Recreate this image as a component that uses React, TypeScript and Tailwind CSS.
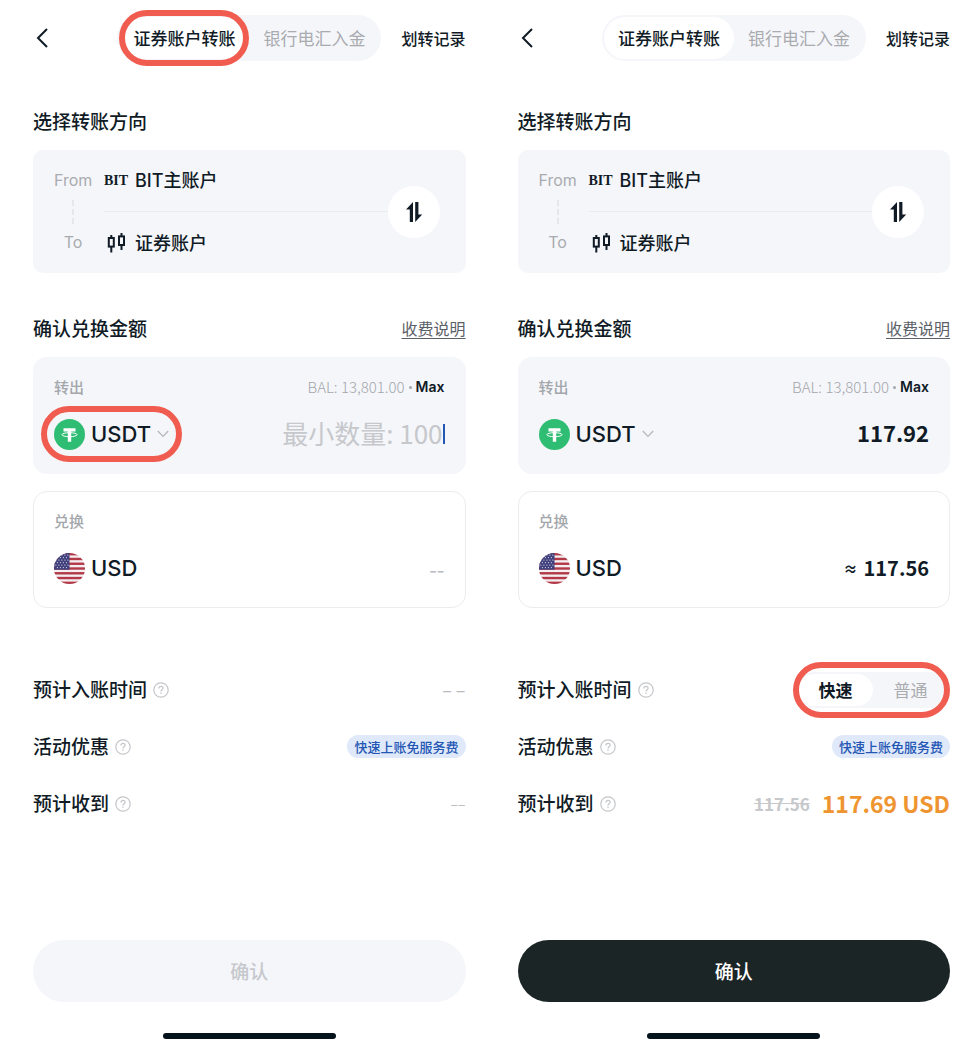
import React, { useState } from "react";

const STARS = [
  [1.5, 1.5], [4.5, 1.5], [7.5, 1.5], [10.5, 1.5], [13.5, 1.5],
  [3, 4], [6, 4], [9, 4], [12, 4],
  [1.5, 6.5], [4.5, 6.5], [7.5, 6.5], [10.5, 6.5], [13.5, 6.5],
  [3, 9], [6, 9], [9, 9], [12, 9],
  [1.5, 11.5], [4.5, 11.5], [7.5, 11.5], [10.5, 11.5], [13.5, 11.5],
  [3, 14], [6, 14], [9, 14], [12, 14],
];

const BackIcon = () => (
  <svg width="12" height="20" viewBox="0 0 12 20" fill="none" stroke="currentColor" strokeWidth="2">
    <path d="M11 1 2 10l9 9" />
  </svg>
);

const CandleIcon = () => (
  <svg width="19" height="20" viewBox="0 0 19 20" fill="none" stroke="currentColor" strokeWidth="2">
    <rect x="1.8" y="5" width="5" height="8.6" />
    <path d="M4.3 2V5M4.3 13.6v6" />
    <rect x="12" y="3.4" width="5" height="8.6" />
    <path d="M14.5 0v3.4M14.5 12v5" />
  </svg>
);

const SwapIcon = () => (
  <svg width="18" height="20" viewBox="0 0 18 20" fill="currentColor">
    <path d="M8 0v20H4.8V7.6H1z" />
    <path d="M10.2 20V0h3.2v12.4h3.8z" />
  </svg>
);

const HelpIcon = () => (
  <svg width="16" height="16" viewBox="0 0 16 16" fill="none" stroke="currentColor" strokeWidth="1.2">
    <circle cx="8" cy="8" r="7.2" />
    <path d="M5.9 6.4c0-1.3.9-2.1 2.1-2.1s2.1.8 2.1 1.9c0 1.5-2.1 1.6-2.1 3.2" />
    <path d="M8 10.6v1.4" />
  </svg>
);

const TetherIcon = () => (
  <svg width="31" height="31" viewBox="0 0 31 31">
    <circle cx="15.5" cy="15.5" r="15.5" fill="#2fbc73" />
    <path d="M9.5 9.2h12v3.2h-4.3v10.4h-3.4V12.4H9.5z" fill="#fff" />
    <ellipse cx="15.5" cy="15.7" rx="7.6" ry="2" fill="none" stroke="#fff" strokeWidth="1" />
  </svg>
);

const FlagIcon = () => (
  <svg width="31" height="31" viewBox="0 0 31 31">
    <defs>
      <clipPath id="flag-circle">
        <circle cx="15.5" cy="15.5" r="15.5" />
      </clipPath>
    </defs>
    <g clipPath="url(#flag-circle)">
      <rect width="31" height="31" fill="#f5eef0" />
      {[0, 1, 2, 3, 4, 5, 6].map(i => (
        <rect key={i} y={i * 4.77} width="31" height="2.4" fill="#b23a48" />
      ))}
      <rect width="15.5" height="16.7" fill="#40407c" />
      {STARS.map(([x, y]) => (
        <circle key={`${x}-${y}`} cx={x + 0.4} cy={y + 0.6} r="0.6" fill="#dcdcec" />
      ))}
    </g>
  </svg>
);

const ChevronIcon = () => (
  <svg width="12" height="8" viewBox="0 0 12 8" fill="none" stroke="#b4b7bd" strokeWidth="1.3">
    <path d="m.8 1 5.2 5.4L11.2 1" />
  </svg>
);

// Red outline drawn over the control a step refers to
const Ring = ({ className }: { className: string }) => (
  <span className={`absolute z-10 rounded-full border-6 border-[#f05c50] pointer-events-none ${className}`} />
);

const HelpLabel = ({ text }: { text: string }) => (
  <div className="flex items-center gap-[5px]">
    <span className="text-[19px] font-medium">{text}</span>
    <button aria-label={`${text}说明`} className="p-px text-[#c4c6ca]">
      <HelpIcon />
    </button>
  </div>
);

function Tabs({ ring }: { ring: boolean }) {
  const [tab, setTab] = useState(0);
  return (
    <div className="ml-auto flex h-[46px] rounded-full bg-[#f5f6fa] p-[2px] text-[17px]">
      {["证券账户转账", "银行电汇入金"].map((t, i) => (
        <button
          key={t}
          onClick={() => setTab(i)}
          className={`relative whitespace-nowrap rounded-full px-[14px] ${
            tab === i ? "bg-white font-medium" : "text-[#a9abaf]"
          }`}
        >
          {t}
          {ring && i === 0 && <Ring className="inset-x-0 -inset-y-[7px]" />}
        </button>
      ))}
    </div>
  );
}

function SpeedSwitch() {
  const [speed, setSpeed] = useState(0);
  return (
    <div className="relative flex h-9 rounded-full bg-[#f5f6fa] p-[2px] text-[17px]">
      {["快速", "普通"].map((t, i) => (
        <button
          key={t}
          onClick={() => setSpeed(i)}
          className={`w-[75px] rounded-full ${speed === i ? "bg-white font-bold" : "text-[#a9abaf]"}`}
        >
          {t}
        </button>
      ))}
      <Ring className="-left-[3px] right-0 -inset-y-[10px]" />
    </div>
  );
}

function Direction() {
  return (
    <div className="flex items-center rounded-[10px] bg-[#f5f6fa] py-[15px] pl-[21px] pr-[26px]">
      <div className="grid flex-1 grid-cols-[38px_1fr] items-center gap-x-3 text-[18px] leading-[31px]">
        <span className="text-center font-[Inter] text-[16px] text-[#a9abaf]">From</span>
        <div className="flex items-center gap-[6px]">
          <span className="w-[25px] font-['Liberation_Serif',serif] text-[14px] font-bold">BIT</span>
          <span className="font-['Inter','Noto_Sans_CJK_SC',sans-serif] font-medium">BIT主账户</span>
        </div>
        <div className="mx-auto h-6 border-l-2 border-dashed border-[#e6e7eb]" />
        <div className="flex h-[31px] items-center">
          <div className="h-px w-full bg-[#ebecf0]" />
        </div>
        <span className="text-center font-[Inter] text-[16px] text-[#a9abaf]">To</span>
        <div className="flex items-center gap-[6px]">
          <span className="flex w-[25px] justify-center"><CandleIcon /></span>
          <span className="font-medium">证券账户</span>
        </div>
      </div>
      <button aria-label="切换方向" className="flex size-[52px] items-center justify-center rounded-full bg-white">
        <SwapIcon />
      </button>
    </div>
  );
}

function TransferScreen({ id, filled = false }: { id: string; filled?: boolean }) {
  const [amount, setAmount] = useState(filled ? "117.92" : "");

  return (
    <section className="flex min-w-0 flex-col">
      <header className="mb-[45px] flex items-center gap-5">
        <button aria-label="返回" className="pl-[3px]"><BackIcon /></button>
        <Tabs ring={!filled} />
        <a href="#records" className="whitespace-nowrap text-[16px] font-medium">划转记录</a>
      </header>

      <h2 className="mb-[14px] text-[19px] font-medium leading-[30px]">选择转账方向</h2>
      <Direction />

      <div className="mb-[14px] mt-10 flex items-center justify-between leading-[30px]">
        <h2 className="text-[19px] font-medium">确认兑换金额</h2>
        <a href="#fees" className="text-[16px] text-[#5b6067] underline underline-offset-3">收费说明</a>
      </div>

      <div className="rounded-[14px] bg-[#f5f6fa] px-[21px] py-5">
        <div className="mb-[17px] flex items-center justify-between leading-5">
          <label htmlFor={`${id}-amount`} className="text-[15px] font-medium text-[#a3a6ab]">转出</label>
          <div className="flex items-center gap-1 text-[15px]">
            <span className="font-light text-[#a3a6ab]">BAL: 13,801.00</span>
            <span className="size-[3px] rounded-full bg-[#a3a6ab]" />
            <button className="font-[Inter] text-[14px] font-semibold">Max</button>
          </div>
        </div>
        <div className="flex h-10 items-center">
          <button className="relative flex h-10 items-center gap-[6px]">
            <TetherIcon />
            <span className="font-[Inter] text-[22px] font-medium">USDT</span>
            <ChevronIcon />
            {!filled && <Ring className="-inset-x-[13px] -inset-y-2" />}
          </button>
          <input
            id={`${id}-amount`}
            value={amount}
            onChange={e => setAmount(e.target.value)}
            placeholder="最小数量: 100"
            className={`h-10 min-w-0 flex-1 bg-transparent pb-1 text-right outline-none placeholder:text-[#c6c8cc] ${
              amount ? "text-[22px] font-bold" : "text-[26px]"
            }`}
          />
          {!amount && <span className="h-5 w-[2px] bg-[#2257b3]" />}
        </div>
      </div>

      <div className="mt-[17px] rounded-[14px] border border-[#ebecee] px-5 py-[19px]">
        <div className="mb-[17px] text-[15px] font-medium leading-5 text-[#a3a6ab]">兑换</div>
        <div className="flex h-10 items-center gap-[6px]">
          <FlagIcon />
          <span className="font-[Inter] text-[22px] font-medium">USD</span>
          {filled ? (
            <span className="ml-auto flex items-center gap-[6px] font-bold">
              <span className="text-[14px]">≈</span>
              <span className="text-[20px]">117.56</span>
            </span>
          ) : (
            <span className="ml-auto text-[22px] text-[#b9bbbf]">--</span>
          )}
        </div>
      </div>

      <div className="mt-[53px]">
        <div className="flex h-[57px] items-center justify-between">
          <HelpLabel text="预计入账时间" />
          {filled ? <SpeedSwitch /> : <span className="text-[18px] text-[#b9bbbf]">– –</span>}
        </div>
        <div className="flex h-[57px] items-center justify-between">
          <HelpLabel text="活动优惠" />
          <span className="rounded-full bg-[#dfe9fa] px-[7px] text-[13px] font-medium leading-[23px] text-[#2456b4]">
            快速上账免服务费
          </span>
        </div>
        <div className="flex h-[57px] items-center justify-between">
          <HelpLabel text="预计收到" />
          {filled ? (
            <div className="flex items-center gap-3 font-bold">
              <span className="text-[17px] text-[#c6c8cc] line-through">117.56</span>
              <span className="text-[23px] text-[#ee9431]">117.69 USD</span>
            </div>
          ) : (
            <span className="text-[14px] text-[#b9bbbf]">––</span>
          )}
        </div>
      </div>

      <button
        disabled={!filled}
        className={`mt-[108px] h-[62px] rounded-full text-[19px] font-medium ${
          filled ? "bg-[#1c2526] text-white" : "bg-[#f5f6fa] text-[#c6c8cc]"
        }`}
      >
        确认
      </button>
      <div className="mx-auto mt-[31px] h-[6px] w-2/5 rounded-full bg-[#04131c]" />
    </section>
  );
}

export default function App() {
  return (
    <main className="grid min-h-screen grid-cols-2 gap-[52px] bg-white pb-[18px] pl-[33px] pr-[21px] pt-[15px] font-['Noto_Sans_CJK_SC',sans-serif] text-[#101b26]">
      <TransferScreen id="empty" />
      <TransferScreen id="filled" filled />
    </main>
  );
}
